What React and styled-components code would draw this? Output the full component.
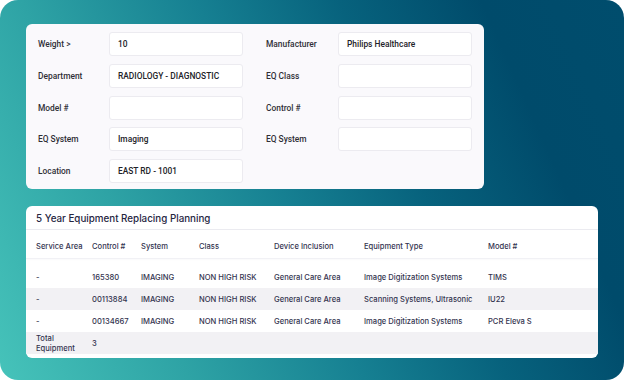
import styled, { createGlobalStyle } from 'styled-components';

const GlobalStyle = createGlobalStyle`
  html, body {
    margin: 0;
    padding: 0;
    background: #ffffff;
  }
  #root {
    width: 624px;
    height: 380px;
  }
`

const Backdrop = styled.div`
  box-sizing: border-box;
  width: 624px;
  height: 380px;
  border-radius: 18px;
  padding: 24px 26px 22px;
  display: flex;
  flex-direction: column;
  gap: 17px;
  background: linear-gradient(66deg, #46c3ba 0%, #2ea3a5 24%, #168092 46%, #07627d 64%, #004b6b 82%, #004d6d 100%);
  overflow: hidden;
`

const FilterCard = styled.div`
  box-sizing: border-box;
  width: 458px;
  height: 165px;
  background: #faf9fc;
  border-radius: 6px;
  padding: 8px 12px 7px;
  display: grid;
  grid-template-columns: 71px 134px 95px 134px;
  row-gap: 7.75px;
  grid-auto-rows: 24px;
  font-family: Roboto, "Liberation Sans", sans-serif;
`

const Label = styled.div`
  display: flex;
  align-items: center;
  font-size: 8.4px;
  font-weight: 500;
  color: #2f2f36;
  padding-left: ${({ $right }) => ($right ? '23px' : '0')};
`

const Field = styled.div`
  box-sizing: border-box;
  display: flex;
  align-items: center;
  padding: 0 8px;
  background: #ffffff;
  border: 1px solid #ecebf0;
  border-radius: 3px;
  font-size: 8.4px;
  font-weight: 500;
  color: #222228;
`

const Spacer = styled.div``

const TableCard = styled.div`
  box-sizing: border-box;
  width: 572px;
  height: 152px;
  background: #ffffff;
  border-radius: 6px;
  overflow: hidden;
  font-family: Inter, "Liberation Sans", sans-serif;
  color: #2e2e4c;
`

const Title = styled.div`
  height: 24px;
  box-sizing: border-box;
  padding: 1px 10px 0;
  display: flex;
  align-items: center;
  font-size: 9.8px;
  font-weight: 500;
  color: #25253f;
  border-bottom: 1px solid #ececf1;
`

const Table = styled.table`
  width: 572px;
  table-layout: fixed;
  border-collapse: collapse;
  font-size: 7.6px;
`

const HeadRow = styled.tr`
  height: 28px;
  box-shadow: 0 1px 2px rgba(30, 30, 60, 0.06);
  border-bottom: 1px solid #f1f1f5;
`

const Th = styled.th`
  text-align: left;
  font-weight: 500;
  padding: 6px 0 0;
  color: #33334f;
  &:first-child {
    padding-left: 10px;
  }
`

const Gap = styled.tr`
  height: 8px;
`

const Row = styled.tr`
  height: 22px;
  background: ${({ $shade }) => ($shade ? '#f2f1f4' : '#ffffff')};
`

const Td = styled.td`
  padding: 1px 0 0;
  font-weight: 500;
  color: #34344f;
  white-space: ${({ $wrap }) => ($wrap ? 'normal' : 'nowrap')};
  line-height: 10px;
  &:first-child {
    padding-left: 10px;
  }
`

const fields = [
  ['Weight >', '10', 'Manufacturer', 'Philips Healthcare'],
  ['Department', 'RADIOLOGY - DIAGNOSTIC', 'EQ Class', ''],
  ['Model #', '', 'Control #', ''],
  ['EQ System', 'Imaging', 'EQ System', ''],
  ['Location', 'EAST RD - 1001', null, null],
]

const columns = [
  ['Service Area', 66],
  ['Control #', 49],
  ['System', 58],
  ['Class', 75],
  ['Device Inclusion', 90],
  ['Equipment Type', 124],
  ['Model #', 110],
]

const rows = [
  ['-', '165380', 'IMAGING', 'NON HIGH RISK', 'General Care Area', 'Image Digitization Systems', 'TIMS'],
  ['-', '00113884', 'IMAGING', 'NON HIGH RISK', 'General Care Area', 'Scanning Systems, Ultrasonic', 'IU22'],
  ['-', '00134667', 'IMAGING', 'NON HIGH RISK', 'General Care Area', 'Image Digitization Systems', 'PCR Eleva S'],
]

export default function App() {
  return (
    <>
      <GlobalStyle />
      <Backdrop>
        <FilterCard>
          {fields.map(([l1, v1, l2, v2]) => (
            <>
              <Label key={l1}>{l1}</Label>
              <Field>{v1}</Field>
              {l2 !== null ? (
                <>
                  <Label $right>{l2}</Label>
                  <Field>{v2}</Field>
                </>
              ) : (
                <>
                  <Spacer />
                  <Spacer />
                </>
              )}
            </>
          ))}
        </FilterCard>

        <TableCard>
          <Title>5 Year Equipment Replacing Planning</Title>
          <Table>
            <colgroup>
              {columns.map(([name, w]) => (
                <col key={name} style={{ width: w }} />
              ))}
            </colgroup>
            <thead>
              <HeadRow>
                {columns.map(([name]) => (
                  <Th key={name}>{name}</Th>
                ))}
              </HeadRow>
            </thead>
            <tbody>
              <Gap />
              {rows.map((r, i) => (
                <Row key={r[1]} $shade={i % 2 === 1}>
                  {r.map((c, j) => (
                    <Td key={j}>{c}</Td>
                  ))}
                </Row>
              ))}
              <Row $shade>
                <Td $wrap>Total Equipment</Td>
                <Td>3</Td>
                <Td />
                <Td />
                <Td />
                <Td />
                <Td />
              </Row>
            </tbody>
          </Table>
        </TableCard>
      </Backdrop>
    </>
  )
}
